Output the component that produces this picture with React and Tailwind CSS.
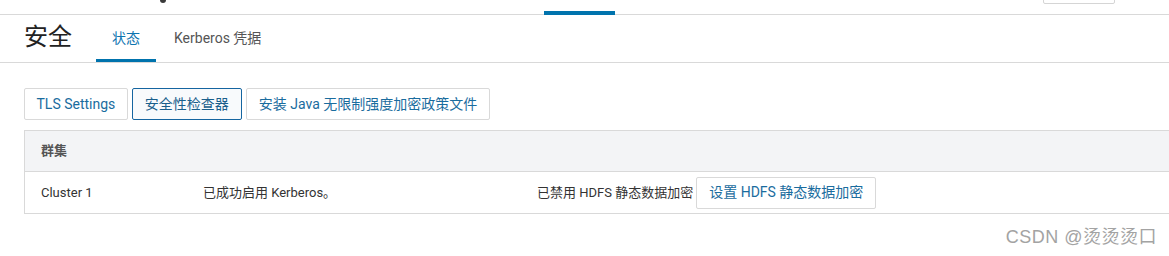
export default function App() {
  const font = { fontFamily: 'Roboto, "Noto Sans CJK SC", sans-serif' };
  return (
    <div className="relative w-[1169px] h-[256px] overflow-hidden bg-white text-[#333]" style={font}>
      {/* top nav remnant */}
      <div className="relative h-[15px] border-b border-[#d9d9d9]">
        <div className="absolute left-[160px] top-0 w-[6px] h-[3px] rounded-b-full bg-[#3a3a3a]" />
        <div className="absolute left-[544px] bottom-[-1px] w-[71px] h-[4px] bg-[#0073ad]" />
        <div className="absolute left-[1043px] top-[-6px] w-[72px] h-[10px] border border-[#d5d5d5] rounded-[2px]" />
      </div>

      {/* page header with tabs */}
      <div className="flex items-end h-[48px] pl-[24px] border-b border-[#d9d9d9]">
        <h1 className="self-center mt-[-4px] text-[24px] leading-[30px] text-[#222] font-normal">安全</h1>
        <div className="flex ml-[24px] h-full">
          <div className="flex items-center px-[16px] border-b-[3px] border-[#0073ad] text-[14px] text-[#0d74b0] pt-[3px]">状态</div>
          <div className="flex items-center px-[18px] border-b-[3px] border-transparent text-[14px] text-[#555] pt-[3px]">Kerberos 凭据</div>
        </div>
      </div>

      {/* actions */}
      <div className="flex gap-[4px] pl-[24px] pt-[25px]">
        <button className="h-[32px] px-[11.5px] border border-[#d9d9d9] rounded-[2px] bg-white text-[14px] text-[#1a6c9e]">TLS Settings</button>
        <button className="h-[32px] px-[12px] border border-[#1565a0] rounded-[2px] bg-[#f8fafc] text-[14px] text-[#1a5f8c]">安全性检查器</button>
        <button className="h-[32px] px-[12px] border border-[#d9d9d9] rounded-[2px] bg-white text-[14px] text-[#1a6c9e]">安装 Java 无限制强度加密政策文件</button>
      </div>

      {/* table */}
      <div className="ml-[24px] mt-[10px] w-[1160px] border border-[#d9d9d9] text-[13px]">
        <div className="flex items-center h-[41px] bg-[#f3f4f6] border-b border-[#d9d9d9] pl-[16px] font-bold text-[#555]">群集</div>
        <div className="flex items-center h-[41px] pl-[16px] text-[#333]">
          <div className="w-[162px]">Cluster 1</div>
          <div className="w-[334px]">已成功启用 Kerberos。</div>
          <div className="flex items-center">
            <span>已禁用 HDFS 静态数据加密</span>
            <button className="ml-[3px] h-[32px] px-[12px] border border-[#d9d9d9] rounded-[2px] bg-white text-[14px] text-[#1a6c9e]">设置 HDFS 静态数据加密</button>
          </div>
        </div>
      </div>

      {/* watermark */}
      <div className="absolute right-[12px] top-[226px] text-[18px] leading-[22px] tracking-[0.5px] text-[#a3a3a3]" style={{ fontFamily: 'Arial, "Liberation Sans", "Noto Sans CJK SC", sans-serif' }}>CSDN @烫烫烫口</div>
    </div>
  );
}
